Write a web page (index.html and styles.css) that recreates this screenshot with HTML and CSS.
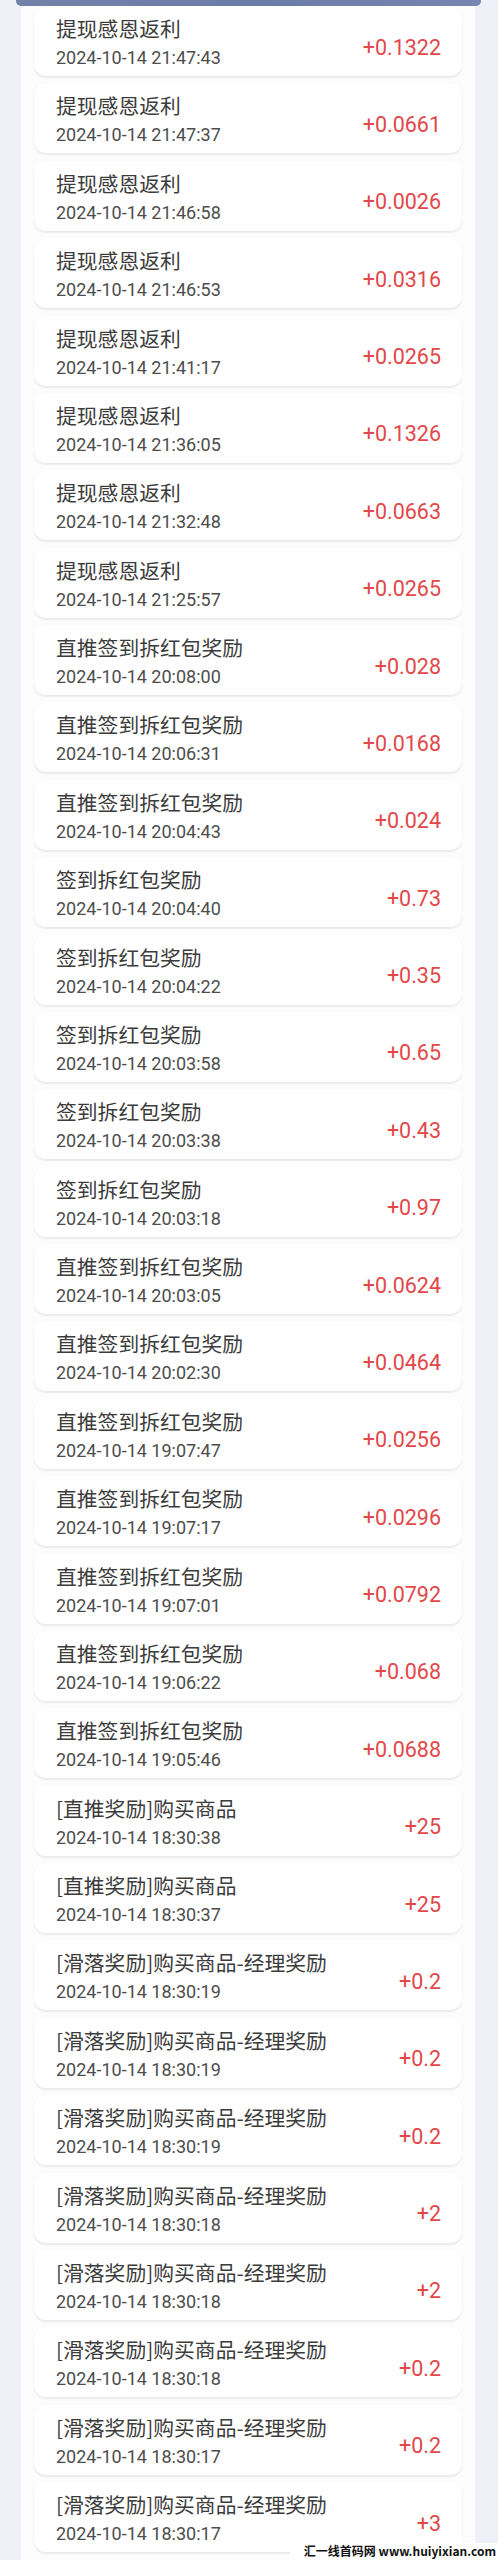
FILE: index.html
```html
<!DOCTYPE html>
<html lang="zh">
<head>
<meta charset="utf-8">
<link rel="stylesheet" href="styles.css">
</head>
<body>
<div class="page">
  <div class="panel">
    <div class="topbar"></div>
    <div class="list">
      <div class="card"><div class="info"><div class="title">提现感恩返利</div><div class="date">2024-10-14 21:47:43</div></div><div class="amount">+0.1322</div></div>
      <div class="card"><div class="info"><div class="title">提现感恩返利</div><div class="date">2024-10-14 21:47:37</div></div><div class="amount">+0.0661</div></div>
      <div class="card"><div class="info"><div class="title">提现感恩返利</div><div class="date">2024-10-14 21:46:58</div></div><div class="amount">+0.0026</div></div>
      <div class="card"><div class="info"><div class="title">提现感恩返利</div><div class="date">2024-10-14 21:46:53</div></div><div class="amount">+0.0316</div></div>
      <div class="card"><div class="info"><div class="title">提现感恩返利</div><div class="date">2024-10-14 21:41:17</div></div><div class="amount">+0.0265</div></div>
      <div class="card"><div class="info"><div class="title">提现感恩返利</div><div class="date">2024-10-14 21:36:05</div></div><div class="amount">+0.1326</div></div>
      <div class="card"><div class="info"><div class="title">提现感恩返利</div><div class="date">2024-10-14 21:32:48</div></div><div class="amount">+0.0663</div></div>
      <div class="card"><div class="info"><div class="title">提现感恩返利</div><div class="date">2024-10-14 21:25:57</div></div><div class="amount">+0.0265</div></div>
      <div class="card"><div class="info"><div class="title">直推签到拆红包奖励</div><div class="date">2024-10-14 20:08:00</div></div><div class="amount">+0.028</div></div>
      <div class="card"><div class="info"><div class="title">直推签到拆红包奖励</div><div class="date">2024-10-14 20:06:31</div></div><div class="amount">+0.0168</div></div>
      <div class="card"><div class="info"><div class="title">直推签到拆红包奖励</div><div class="date">2024-10-14 20:04:43</div></div><div class="amount">+0.024</div></div>
      <div class="card"><div class="info"><div class="title">签到拆红包奖励</div><div class="date">2024-10-14 20:04:40</div></div><div class="amount">+0.73</div></div>
      <div class="card"><div class="info"><div class="title">签到拆红包奖励</div><div class="date">2024-10-14 20:04:22</div></div><div class="amount">+0.35</div></div>
      <div class="card"><div class="info"><div class="title">签到拆红包奖励</div><div class="date">2024-10-14 20:03:58</div></div><div class="amount">+0.65</div></div>
      <div class="card"><div class="info"><div class="title">签到拆红包奖励</div><div class="date">2024-10-14 20:03:38</div></div><div class="amount">+0.43</div></div>
      <div class="card"><div class="info"><div class="title">签到拆红包奖励</div><div class="date">2024-10-14 20:03:18</div></div><div class="amount">+0.97</div></div>
      <div class="card"><div class="info"><div class="title">直推签到拆红包奖励</div><div class="date">2024-10-14 20:03:05</div></div><div class="amount">+0.0624</div></div>
      <div class="card"><div class="info"><div class="title">直推签到拆红包奖励</div><div class="date">2024-10-14 20:02:30</div></div><div class="amount">+0.0464</div></div>
      <div class="card"><div class="info"><div class="title">直推签到拆红包奖励</div><div class="date">2024-10-14 19:07:47</div></div><div class="amount">+0.0256</div></div>
      <div class="card"><div class="info"><div class="title">直推签到拆红包奖励</div><div class="date">2024-10-14 19:07:17</div></div><div class="amount">+0.0296</div></div>
      <div class="card"><div class="info"><div class="title">直推签到拆红包奖励</div><div class="date">2024-10-14 19:07:01</div></div><div class="amount">+0.0792</div></div>
      <div class="card"><div class="info"><div class="title">直推签到拆红包奖励</div><div class="date">2024-10-14 19:06:22</div></div><div class="amount">+0.068</div></div>
      <div class="card"><div class="info"><div class="title">直推签到拆红包奖励</div><div class="date">2024-10-14 19:05:46</div></div><div class="amount">+0.0688</div></div>
      <div class="card"><div class="info"><div class="title">[直推奖励]购买商品</div><div class="date">2024-10-14 18:30:38</div></div><div class="amount">+25</div></div>
      <div class="card"><div class="info"><div class="title">[直推奖励]购买商品</div><div class="date">2024-10-14 18:30:37</div></div><div class="amount">+25</div></div>
      <div class="card"><div class="info"><div class="title">[滑落奖励]购买商品-经理奖励</div><div class="date">2024-10-14 18:30:19</div></div><div class="amount">+0.2</div></div>
      <div class="card"><div class="info"><div class="title">[滑落奖励]购买商品-经理奖励</div><div class="date">2024-10-14 18:30:19</div></div><div class="amount">+0.2</div></div>
      <div class="card"><div class="info"><div class="title">[滑落奖励]购买商品-经理奖励</div><div class="date">2024-10-14 18:30:19</div></div><div class="amount">+0.2</div></div>
      <div class="card"><div class="info"><div class="title">[滑落奖励]购买商品-经理奖励</div><div class="date">2024-10-14 18:30:18</div></div><div class="amount">+2</div></div>
      <div class="card"><div class="info"><div class="title">[滑落奖励]购买商品-经理奖励</div><div class="date">2024-10-14 18:30:18</div></div><div class="amount">+2</div></div>
      <div class="card"><div class="info"><div class="title">[滑落奖励]购买商品-经理奖励</div><div class="date">2024-10-14 18:30:18</div></div><div class="amount">+0.2</div></div>
      <div class="card"><div class="info"><div class="title">[滑落奖励]购买商品-经理奖励</div><div class="date">2024-10-14 18:30:17</div></div><div class="amount">+0.2</div></div>
      <div class="card"><div class="info"><div class="title">[滑落奖励]购买商品-经理奖励</div><div class="date">2024-10-14 18:30:17</div></div><div class="amount">+3</div></div>
    </div>
  </div>
  <div class="watermark">汇一线首码网 www.huiyixian.com</div>
</div>
</body>
</html>
```

FILE: styles.css
```css
html, body {
  margin: 0;
  padding: 0;
  background: #eef0f7;
}
body {
  font-family: Roboto, "Noto Sans CJK SC", sans-serif;
  width: 498px;
  height: 2560px;
  overflow: hidden;
}
.page {
  position: relative;
  width: 498px;
  height: 2560px;
  overflow: hidden;
}
.panel {
  margin: 0 23px 0 21px;
  background: #fcfcfd;
  height: 2560px;
  position: relative;
}
.topbar {
  height: 6px;
  margin: 0 -6px 0 -5px;
  background: linear-gradient(90deg, #7283ab, #6a7ca8 50%, #7587b0);
  border-radius: 0 0 5px 5px;
}
.list {
  display: flex;
  flex-direction: column;
  gap: 7.375px;
  padding: 0 13px 0 13px;
}
.card {
  height: 70px;
  box-sizing: border-box;
  background: #ffffff;
  border-radius: 12px;
  box-shadow: 0 1.5px 2px rgba(0, 0, 0, 0.07), 0 0 1px rgba(0, 0, 0, 0.04);
  display: flex;
  align-items: flex-start;
  justify-content: space-between;
  padding: 8px 21px 0 22px;
}
.info {
  display: flex;
  flex-direction: column;
}
.title {
  font-size: 20.8px;
  line-height: 29px;
  color: #3c3c3c;
  font-family: "Noto Sans CJK SC", sans-serif;
}
.date {
  font-size: 18px;
  line-height: 29px;
  color: #4d4d4d;
}
.amount {
  align-self: center;
  margin-top: 4px;
  font-size: 21.5px;
  color: #e2474a;
}
.watermark {
  position: absolute;
  right: 0;
  bottom: 0;
  width: 208px;
  height: 17px;
  background: #ffffff;
  font-family: "Noto Sans CJK SC", sans-serif;
  font-weight: 700;
  font-size: 12px;
  line-height: 15px;
  color: #111;
  text-align: right;
  padding-right: 2px;
  box-sizing: border-box;
  white-space: nowrap;
}
```
